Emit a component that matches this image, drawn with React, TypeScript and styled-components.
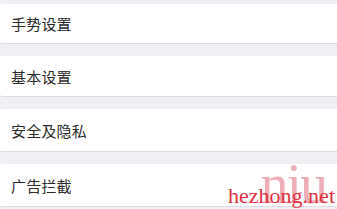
import styled, { createGlobalStyle } from "styled-components";

const GlobalStyle = createGlobalStyle`
  html, body {
    margin: 0;
    padding: 0;
    background: #efeff4;
  }
  body {
    font-family: "Noto Sans CJK SC", "Noto Sans", sans-serif;
  }
`;

const Page = styled.div`
  position: relative;
  width: 337px;
  height: 209px;
  overflow: hidden;
  background: #efeff4;
  display: flex;
  flex-direction: column;
  gap: 12px;
  padding-top: 4px;
  box-sizing: border-box;
`;

const Row = styled.div<{ $h: number }>`
  height: ${(p) => p.$h}px;
  background: #ffffff;
  border-bottom: 1px solid #dcdce0;
  border-radius: 3px 0 0 3px;
  display: flex;
  align-items: center;
  padding-left: 11px;
  box-sizing: border-box;
  font-size: 15px;
  color: #2b2b2b;
  letter-spacing: 0.2px;
`;

// watermark in the bottom right corner
const Mark = styled.div`
  position: absolute;
  right: 2px;
  bottom: 2px;
  width: 110px;
  height: 60px;
  font-family: "Liberation Serif", serif;
  pointer-events: none;
`;

const Big = styled.div`
  position: absolute;
  right: 9px;
  bottom: -5px;
  font-size: 56px;
  line-height: 1;
  color: rgba(225, 120, 135, 0.6);
  letter-spacing: -2px;
`;

const Small = styled.div`
  position: absolute;
  right: 0;
  bottom: 0;
  font-size: 22px;
  line-height: 1;
  color: #e0323f;
`;

const items = [
  { label: "手势设置", h: 40 },
  { label: "基本设置", h: 41 },
  { label: "安全及隐私", h: 43 },
  { label: "广告拦截", h: 43 },
];

export default function App() {
  return (
    <>
      <GlobalStyle />
      <Page>
        {items.map((it) => (
          <Row key={it.label} $h={it.h}>
            {it.label}
          </Row>
        ))}
        <Mark>
          <Big>niu</Big>
          <Small>hezhong.net</Small>
        </Mark>
      </Page>
    </>
  );
}
